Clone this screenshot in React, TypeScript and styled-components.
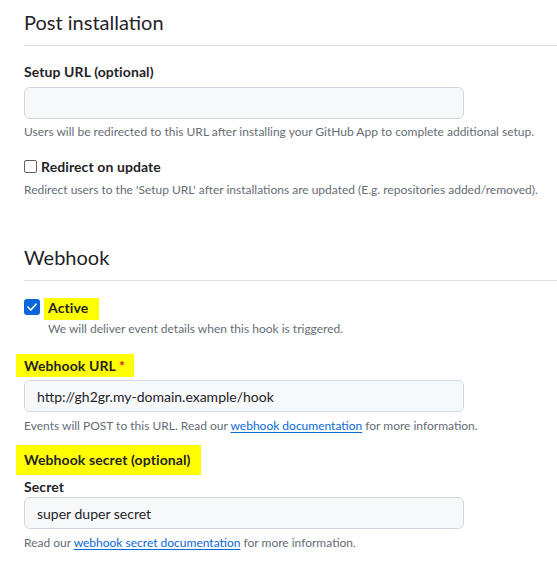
import styled, { createGlobalStyle } from 'styled-components';

const GlobalStyle = createGlobalStyle`
  html, body {
    margin: 0;
    padding: 0;
    background: #ffffff;
  }
  body {
    font-family: Lato, "Noto Sans", sans-serif;
    color: #1f2328;
    font-size: 14px;
    line-height: 1.5;
  }
`;

const Page = styled.div`
  padding: 6px 0 0 24px;
  width: 533px;
  overflow: hidden;
`;

const Subhead = styled.div<{ $top?: number }>`
  margin-top: ${(p) => p.$top ?? 0}px;
  padding-bottom: 6px;
  border-bottom: 1px solid #d8dee4;
`;

const SubheadTitle = styled.h2`
  margin: 0;
  font-size: 20px;
  font-weight: 400;
  line-height: 33px;
`;

const FormGroup = styled.div<{ $top: number }>`
  margin-top: ${(p) => p.$top}px;
`;

const Label = styled.label<{ $top?: number }>`
  display: block;
  margin-top: ${(p) => p.$top ?? 0}px;
  font-weight: 700;
  font-size: 14px;
  line-height: 21px;
  letter-spacing: 0.1px;
`;

const Highlight = styled.span<{ $left: number; $right: number; $padTop: number; $padBottom: number; $line?: number }>`
  display: inline-block;
  vertical-align: top;
  background: #ffff00;
  line-height: ${(p) => p.$line ?? 21}px;
  padding: ${(p) => p.$padTop}px ${(p) => p.$right}px ${(p) => p.$padBottom}px ${(p) => p.$left}px;
`;

const Pull = styled.div`
  margin-left: -8px;
`;

const Required = styled.span`
  color: #d1242f;
`;

const Input = styled.input<{ $top: number }>`
  display: block;
  box-sizing: border-box;
  width: 440px;
  height: 32px;
  margin-top: ${(p) => p.$top}px;
  padding: 0 12px;
  font-family: inherit;
  font-size: 14px;
  color: #1f2328;
  background: #f6f8fa;
  border: 1px solid #d0d7de;
  border-radius: 6px;
  outline: none;
`;

const Note = styled.p<{ $indent?: number; $top?: number }>`
  margin: ${(p) => p.$top ?? 4}px 0 0 ${(p) => p.$indent ?? 0}px;
  font-size: 12px;
  line-height: 18px;
  color: #656d76;
  white-space: nowrap;
`;

const Link = styled.a`
  color: #0969da;
  text-decoration: underline;
  text-underline-offset: 2px;
`;

const CheckRow = styled.div`
  display: flex;
  align-items: center;
  gap: 4px;
  font-weight: 700;
  line-height: 21px;
  letter-spacing: 0.1px;
`;

const Box = styled.span<{ $checked?: boolean }>`
  box-sizing: border-box;
  display: inline-flex;
  align-items: center;
  justify-content: center;
  width: ${(p) => (p.$checked ? 16 : 13)}px;
  height: ${(p) => (p.$checked ? 16 : 13)}px;
  margin-bottom: ${(p) => (p.$checked ? 4 : 0)}px;
  border-radius: ${(p) => (p.$checked ? 3 : 2)}px;
  border: ${(p) => (p.$checked ? 'none' : '1px solid #5f6368')};
  background: ${(p) => (p.$checked ? '#0a66d8' : '#ffffff')};
`;

const Checkbox = ({ checked }: { checked?: boolean }) => (
  <Box $checked={checked}>
    {checked && (
      <svg width="12" height="12" viewBox="0 0 12 12" fill="none">
        <path d="M2 6.2 L4.8 9 L10 3.2" stroke="#ffffff" strokeWidth="1.7" strokeLinecap="round" strokeLinejoin="round" />
      </svg>
    )}
  </Box>
);

export default function App() {
  return (
    <Page>
      <GlobalStyle />
      <Subhead>
        <SubheadTitle>Post installation</SubheadTitle>
      </Subhead>

      <FormGroup $top={15}>
        <Label>Setup URL (optional)</Label>
        <Input type="text" defaultValue="" $top={5} />
        <Note>Users will be redirected to this URL after installing your GitHub App to complete additional setup.</Note>
      </FormGroup>

      <FormGroup $top={15}>
        <CheckRow>
          <Checkbox />
          <span>Redirect on update</span>
        </CheckRow>
        <Note>Redirect users to the 'Setup URL' after installations are updated (E.g. repositories added/removed).</Note>
      </FormGroup>

      <Subhead $top={42}>
        <SubheadTitle>Webhook</SubheadTitle>
      </Subhead>

      <FormGroup $top={17}>
        <CheckRow>
          <Checkbox checked />
          <Highlight $left={4} $right={11} $padTop={0} $padBottom={2} $line={20}>Active</Highlight>
        </CheckRow>
        <Note $indent={24} $top={0}>We will deliver event details when this hook is triggered.</Note>
      </FormGroup>

      <FormGroup $top={16}>
        <Pull>
          <Label>
            <Highlight $left={8} $right={9} $padTop={1} $padBottom={1}>
              Webhook URL <Required>*</Required>
            </Highlight>
          </Label>
        </Pull>
        <Input type="text" defaultValue="http://gh2gr.my-domain.example/hook" $top={3} />
        <Note $top={5}>
          Events will POST to this URL. Read our <Link href="#">webhook documentation</Link> for more information.
        </Note>
      </FormGroup>

      <FormGroup $top={10}>
        <Pull>
          <Label>
            <Highlight $left={8} $right={10} $padTop={5} $padBottom={5} $line={20}>Webhook secret (optional)</Highlight>
          </Label>
        </Pull>
        <Label $top={1}>Secret</Label>
        <Input type="text" defaultValue="super duper secret" $top={0} />
        <Note $top={5}>
          Read our <Link href="#">webhook secret documentation</Link> for more information.
        </Note>
      </FormGroup>
    </Page>
  );
}
